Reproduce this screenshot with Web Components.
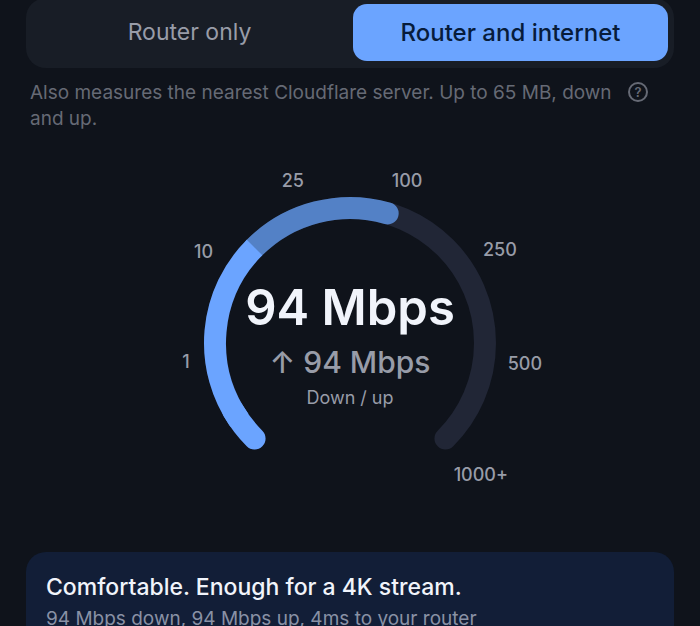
<!DOCTYPE html>
<html lang="en">
<head>
<meta charset="utf-8">
<meta name="viewport" content="width=device-width, initial-scale=1">
<title>Speed test</title>
<style>
  :root {
    --bg: #0f131b;
    --surface: #181d26;
    --accent: #6ba4ff;
    --accent-dim: #5381c6;
    --on-accent: #071c3b;
    --track: #212636;
    --text: #f1f4fb;
    --text-muted: #989ca8;
    --text-faint: #666a75;
    --card: #121e37;
  }

  html {
    scrollbar-width: none;
  }

  body {
    margin: 0;
    background: var(--bg);
    color: var(--text);
    font-family: Inter, "Liberation Sans", sans-serif;
  }
</style>
</head>
<body>

<speed-test-page>
  <segmented-control slot="mode" label="Test mode">
    <segment-button>Router only</segment-button>
    <segment-button selected>Router and internet</segment-button>
  </segmented-control>
  <help-note slot="note">Also measures the nearest Cloudflare server. Up to 65 MB, down and up.</help-note>
  <speed-gauge slot="gauge" value="94">
    <span slot="down">94 Mbps</span>
    <span slot="up">↑ 94 Mbps</span>
    <span slot="caption">Down / up</span>
  </speed-gauge>
  <result-card slot="result">
    <span slot="title">Comfortable. Enough for a 4K stream.</span>
    94 Mbps down, 94 Mbps up, 4ms to your router
  </result-card>
</speed-test-page>

<script>
/* Page column */
class SpeedTestPage extends HTMLElement {
  constructor() {
    super();
    this.attachShadow({ mode: 'open' });
    this.shadowRoot.innerHTML = `
      <style>
        :host {
          display: block;
        }

        main {
          display: flex;
          flex-direction: column;
          padding: 0 26px 24px;
          margin-top: -2px;
        }

        .note {
          padding: 12px 26px 0 4px;
        }

        .gauge {
          padding: 28px 0 48px;
        }
      </style>
      <main>
        <slot name="mode"></slot>
        <div class="note"><slot name="note"></slot></div>
        <div class="gauge"><slot name="gauge"></slot></div>
        <slot name="result"></slot>
      </main>
    `;
  }
}

/* Group of equally wide segments */
class SegmentedControl extends HTMLElement {
  constructor() {
    super();
    this.attachShadow({ mode: 'open' });
  }

  connectedCallback() {
    this.shadowRoot.innerHTML = `
      <style>
        :host {
          display: block;
        }

        .group {
          display: grid;
          grid-auto-flow: column;
          grid-auto-columns: 1fr;
          gap: 6px;
          padding: 6px 6px 7px;
          border-radius: 20px;
          background: var(--surface);
        }
      </style>
      <div class="group" role="group" aria-label="${this.getAttribute('label') || ''}">
        <slot></slot>
      </div>
    `;

    this.addEventListener('click', (e) => {
      const target = e.target.closest('segment-button');
      if (!target) return;
      this.querySelectorAll('segment-button').forEach(segment => {
        segment.toggleAttribute('selected', segment === target);
      });
    });
  }
}

class SegmentButton extends HTMLElement {
  static get observedAttributes() {
    return ['selected'];
  }

  constructor() {
    super();
    this.attachShadow({ mode: 'open' });
    this.shadowRoot.innerHTML = `
      <style>
        :host {
          display: grid;
        }

        button {
          padding: 12px;
          border: 0;
          border-radius: 14px;
          background: none;
          color: var(--text-muted);
          font: 400 23px/33px Inter, "Liberation Sans", sans-serif;
          cursor: pointer;
        }

        :host([selected]) button {
          background: var(--accent);
          color: var(--on-accent);
          font-size: 24px;
          font-weight: 500;
        }

        button:focus-visible {
          outline: 2px solid var(--text);
          outline-offset: 2px;
        }
      </style>
      <button type="button" aria-pressed="false"><slot></slot></button>
    `;
  }

  attributeChangedCallback() {
    this.shadowRoot.querySelector('button')
      .setAttribute('aria-pressed', this.hasAttribute('selected'));
  }
}

/* Explanation with a help button on its right */
class HelpNote extends HTMLElement {
  constructor() {
    super();
    this.attachShadow({ mode: 'open' });
    this.shadowRoot.innerHTML = `
      <style>
        :host {
          display: flex;
          align-items: flex-start;
          gap: 12px;
          color: var(--text-faint);
        }

        p {
          flex: 1;
          margin: 0;
          font-size: 19px;
          line-height: 26px;
        }

        button {
          flex: none;
          display: grid;
          place-items: center;
          width: 20px;
          height: 20px;
          margin: 2px 0 0;
          padding: 0;
          border: 2px solid currentColor;
          border-radius: 50%;
          background: none;
          color: inherit;
          font: 600 13px/16px Inter, "Liberation Sans", sans-serif;
          cursor: pointer;
        }
      </style>
      <p><slot></slot></p>
      <button type="button" aria-label="About this test">?</button>
    `;
  }
}

/* Dial with evenly spaced stops and a non-linear scale between them */
class SpeedGauge extends HTMLElement {
  constructor() {
    super();
    this.attachShadow({ mode: 'open' });
    this.cx = 200;
    this.cy = 183;
    this.radius = 135;
    this.stops = [
      { value: 0 },
      { value: 1, label: '1', distance: 165 },
      { value: 10, label: '10', distance: 173 },
      { value: 25, label: '25', distance: 173 },
      { value: 100, label: '100', distance: 173 },
      { value: 250, label: '250', distance: 177 },
      { value: 500, label: '500', distance: 176 },
      { value: 1000, label: '1000+', distance: 185 }
    ];
  }

  connectedCallback() {
    this.render();
  }

  stopAngle(index) {
    return -135 + 270 * index / (this.stops.length - 1);
  }

  angleFor(value) {
    const last = this.stops.length - 1;
    const i = this.stops.findIndex(stop => stop.value >= value);
    if (i === -1) return this.stopAngle(last);
    if (i === 0) return this.stopAngle(0);
    const from = this.stops[i - 1].value;
    const to = this.stops[i].value;
    return this.stopAngle(i - 1 + (value - from) / (to - from));
  }

  // 0 degrees is the top of the dial
  point(angle, distance) {
    const rad = angle * Math.PI / 180;
    const x = this.cx + distance * Math.sin(rad);
    const y = this.cy - distance * Math.cos(rad);
    return `${x.toFixed(2)} ${y.toFixed(2)}`;
  }

  arc(start, end) {
    const large = end - start > 180 ? 1 : 0;
    return `M${this.point(start, this.radius)} A${this.radius} ${this.radius} 0 ${large} 1 ${this.point(end, this.radius)}`;
  }

  render() {
    const value = this.angleFor(parseFloat(this.getAttribute('value')));
    const split = -45;
    const labels = this.stops.map((stop, i) => {
      if (!stop.label) return '';
      const [x, y] = this.point(this.stopAngle(i), stop.distance).split(' ');
      return `<text x="${x}" y="${y}" dy="7">${stop.label}</text>`;
    }).join('');

    this.shadowRoot.innerHTML = `
      <style>
        :host {
          display: grid;
          justify-items: center;
        }

        svg,
        .readout {
          grid-area: 1 / 1;
        }

        svg {
          width: 400px;
          max-width: 100%;
        }

        path {
          fill: none;
          stroke-width: 22;
        }

        .round {
          stroke-linecap: round;
        }

        text {
          fill: var(--text-muted);
          font-size: 18px;
          font-weight: 500;
          text-anchor: middle;
        }

        .readout {
          display: flex;
          flex-direction: column;
          align-items: center;
          padding-top: 118px;
          white-space: nowrap;
        }

        .down {
          font-size: 49px;
          font-weight: 600;
          line-height: 60px;
        }

        .up {
          color: var(--text-muted);
          font-size: 30px;
          font-weight: 500;
          line-height: 48px;
        }

        .caption {
          color: var(--text-muted);
          font-size: 18px;
          line-height: 24px;
        }
      </style>
      <svg viewBox="0 0 400 344" aria-hidden="true">
        <path class="round" stroke="var(--track)" d="${this.arc(-135, 135)}"/>
        <path class="round" stroke="var(--accent-dim)" d="${this.arc(split, value)}"/>
        <path class="round" stroke="var(--accent)" d="${this.arc(-135, -120)}"/>
        <path stroke="var(--accent)" d="${this.arc(-125, split)}"/>
        ${labels}
      </svg>
      <div class="readout">
        <div class="down"><slot name="down"></slot></div>
        <div class="up"><slot name="up"></slot></div>
        <div class="caption"><slot name="caption"></slot></div>
      </div>
    `;
  }
}

/* Verdict */
class ResultCard extends HTMLElement {
  constructor() {
    super();
    this.attachShadow({ mode: 'open' });
    this.shadowRoot.innerHTML = `
      <style>
        :host {
          display: block;
          padding: 19px 20px;
          border-radius: 20px;
          background: var(--card);
        }

        h2 {
          margin: 0;
          font-size: 23px;
          font-weight: 500;
          line-height: 32px;
        }

        p {
          margin: 3px 0 0;
          color: #8991a5;
          font-size: 19px;
          line-height: 26px;
        }
      </style>
      <h2><slot name="title"></slot></h2>
      <p><slot></slot></p>
    `;
  }
}

customElements.define('speed-test-page', SpeedTestPage);
customElements.define('segmented-control', SegmentedControl);
customElements.define('segment-button', SegmentButton);
customElements.define('help-note', HelpNote);
customElements.define('speed-gauge', SpeedGauge);
customElements.define('result-card', ResultCard);
</script>
</body>
</html>
